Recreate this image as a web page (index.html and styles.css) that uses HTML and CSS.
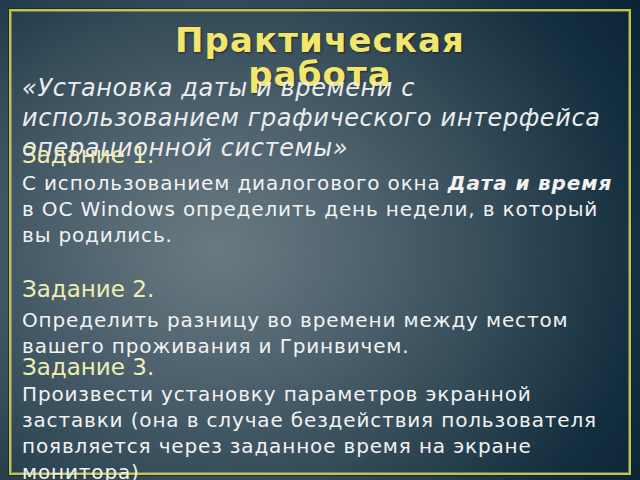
FILE: index.html
```html
<!DOCTYPE html>
<html lang="ru">
<head>
  <meta charset="UTF-8" />
  <title>Практическая работа</title>
  <link rel="stylesheet" href="styles.css">
</head>
<body>
  <div class="slide">
    <div class="frame">
      <h1 class="title">Практическая<br>работа</h1>
      <p class="subtitle">«Установка даты и времени с использованием графического интерфейса операционной системы»</p>
      <div class="tasks">
        <h2>Задание 1.</h2>
        <p>С использованием диалогового окна <b><i>Дата и время</i></b> в ОС Windows определить день недели, в который вы родились.</p>
        <h2 class="task-2">Задание 2.</h2>
        <p>Определить разницу во времени между местом вашего проживания и Гринвичем.</p>
        <h2 class="task-3">Задание 3.</h2>
        <p>Произвести установку параметров экранной заставки (она в случае бездействия пользователя появляется через заданное время на экране монитора)</p>
      </div>
    </div>
  </div>
</body>
</html>
```

FILE: styles.css
```css
body {
  margin: 0;
  font-family: "DejaVu Sans", "Noto Sans", sans-serif;
  background: #0c2536;
}

.slide {
  width: 640px;
  height: 480px;
  overflow: hidden;
  padding: 9px;
  box-sizing: border-box;
  background: radial-gradient(ellipse 80% 90% at 34% 52%, #6a7a80 0%, #506470 28%, #344b58 55%, #122d3e 85%, #0c2536 100%);
}

/* рамка слайда */
.frame {
  height: 462px;
  border: 2px solid #c0c448;
  box-shadow: 0 0 0 1px rgba(20, 30, 10, 0.6), inset 0 0 0 1px rgba(230, 235, 150, 0.35);
  display: grid;
}

/* текстовые блоки слайда лежат друг на друге, как в презентации */
.frame > * {
  grid-area: 1 / 1;
  margin: 0;
}

.title {
  padding-top: 12px;
  text-align: center;
  font-size: 34px;
  line-height: 34px;
  font-weight: bold;
  color: #f3e66c;
  letter-spacing: 1.1px;
  text-shadow: 1px 1px 2px rgba(0, 0, 0, 0.5);
}

.subtitle {
  padding: 62px 7px 0 11px;
  font-size: 24px;
  line-height: 30px;
  font-style: italic;
  letter-spacing: 0.6px;
  color: #ececec;
}

.tasks {
  padding: 129px 7px 0 11px;
}

.tasks h2 {
  margin: 0;
  font-size: 23px;
  font-weight: normal;
  line-height: 30px;
  color: #efedb2;
}

.tasks p {
  margin: 0;
  font-size: 20px;
  line-height: 26px;
  letter-spacing: 0.85px;
  color: #f2f2f2;
}

.tasks .task-2 {
  margin: 26px 0 3px;
}

.tasks .task-3 {
  line-height: 22px;
  margin: -3px 0 3px;
}
```
